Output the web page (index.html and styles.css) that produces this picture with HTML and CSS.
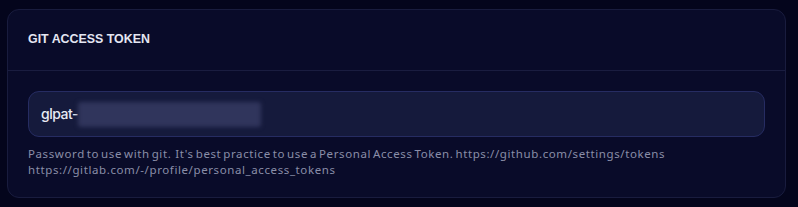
FILE: index.html
```html
<!DOCTYPE html>
<html>
<head>
<meta charset="utf-8">
<link rel="stylesheet" href="styles.css">
</head>
<body>
<div class="page">
  <section class="card">
    <header class="card-header">
      <h2 class="card-title">GIT ACCESS TOKEN</h2>
    </header>
    <div class="card-body">
      <div class="input">
        <span class="input-text">glpat-</span><span class="secret"></span>
      </div>
      <p class="help">Password to use with git.&nbsp; It's best practice to use a Personal Access Token. https://github.com/settings/tokens<br>https://gitlab.com/-/profile/personal_access_tokens</p>
    </div>
  </section>
</div>
</body>
</html>
```
FILE: styles.css
```css
html, body {
  margin: 0;
  padding: 0;
  background: #04051c;
  height: 100%;
}
.page {
  padding: 9px 12px 0 7px;
}
.card {
  background: #090b29;
  border: 1px solid #191c3e;
  border-radius: 12px;
  box-sizing: border-box;
  height: 189px;
}
.card-header {
  height: 60px;
  border-bottom: 1px solid #1a1d40;
  display: flex;
  align-items: center;
  padding-left: 20px;
}
.card-title {
  margin: 0;
  font-family: "Liberation Sans", Arial, sans-serif;
  font-size: 12.4px;
  font-weight: 600;
  color: #e4e6f2;
  letter-spacing: 0;
  padding-bottom: 2px;
}
.card-body {
  padding: 20px 20px 0 20px;
}
.input {
  height: 46px;
  box-sizing: border-box;
  background: #151a3c;
  border: 1px solid #262c62;
  border-radius: 11px;
  display: flex;
  align-items: center;
  padding-left: 12px;
}
.input-text {
  font-family: Inter, sans-serif;
  font-size: 14px;
  font-weight: 500;
  letter-spacing: -0.5px;
  color: #e8eaf4;
  padding-bottom: 2px;
}
.secret {
  display: inline-block;
  width: 183px;
  height: 25px;
  background: #30355c;
  filter: blur(2px);
  border-radius: 3px;
  margin-left: 0;
}
.help {
  margin: 9px 0 0 0;
  font-family: "Noto Sans", sans-serif;
  font-size: 11.5px;
  letter-spacing: 0.6px;
  word-spacing: -1.6px;
  line-height: 16px;
  color: #8a8ea8;
}
```
